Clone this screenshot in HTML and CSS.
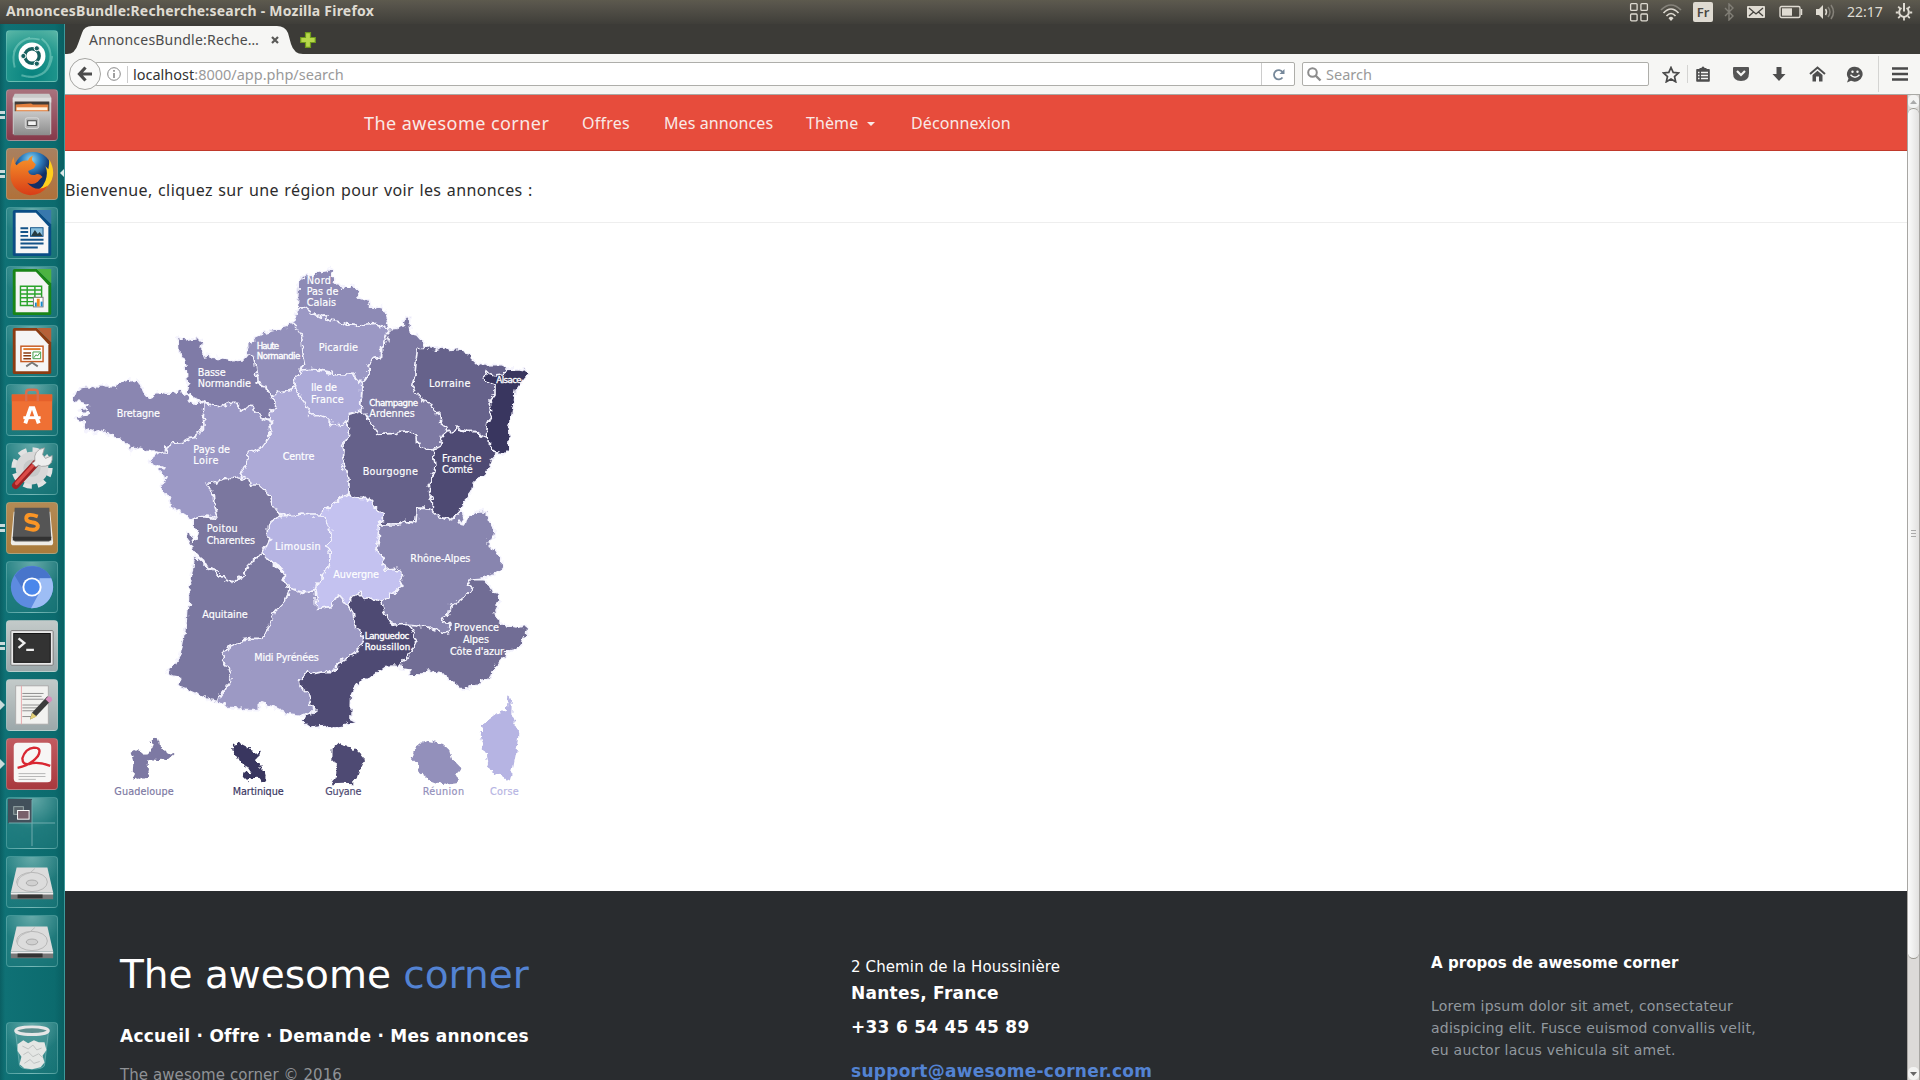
FILE: index.html
```html
<!DOCTYPE html>
<html lang="fr">
<head>
<meta charset="utf-8">
<title>AnnoncesBundle:Recherche:search</title>
<link rel="stylesheet" href="styles.css">
</head>
<body>
<header class="panel">
  <div class="panel-title">AnnoncesBundle:Recherche:search - Mozilla Firefox</div>
  <div class="indicators">
    <svg width="20" height="20" viewBox="0 0 20 20" fill="none" stroke="#dfdbd2" stroke-width="1.3"><rect x="1.6" y="1.6" width="6.5" height="6.8" rx="1"/><rect x="11.9" y="1.6" width="6.5" height="6.8" rx="1"/><rect x="1.6" y="12" width="6.5" height="6.8" rx="1"/><rect x="11.9" y="12" width="6.5" height="6.8" rx="1"/></svg>
    <svg width="22" height="20" viewBox="0 0 22 20" fill="none" stroke-width="1.7"><path d="M1 8Q11-2 21 8" stroke="#85827a"/><path d="M3.500 11Q11 3 18.500 11M6.500 14Q11 9 15.500 14" stroke="#dfdbd2"/><path d="M8.500 16.200Q11 13.500 13.500 16.200L11 19z" fill="#dfdbd2"/></svg>
    <span class="keyboard">Fr</span>
    <svg width="12" height="18" viewBox="0 0 12 18" fill="none" stroke="#827f77" stroke-width="1.4"><path d="M2 5l8 8-4 4V1l4 4-8 8"/></svg>
    <svg width="20" height="14" viewBox="0 0 20 14"><rect x="1" y="1" width="18" height="12" rx="1" fill="#dfdbd2"/><path d="M3 3l7 6 7-6M3 11l4.500-4M17 11l-4.500-4" fill="none" stroke="#45433e" stroke-width="1.300"/></svg>
    <svg width="24" height="14" viewBox="0 0 24 14"><rect x="1" y="1.500" width="20" height="11" rx="1.500" fill="none" stroke="#dfdbd2" stroke-width="1.400"/><rect x="3" y="3.300" width="10" height="7.400" fill="#dfdbd2"/><path d="M22.500 4v6" stroke="#dfdbd2" stroke-width="1.500"/></svg>
    <svg width="20" height="18" viewBox="0 0 20 18" fill="none" stroke-width="1.500"><path d="M1 6h3l4-4v14l-4-4H1z" fill="#dfdbd2"/><path d="M10.500 6q2 3 0 6" stroke="#dfdbd2"/><path d="M13 4q4 5 0 10M16 2q5 7 0 14" stroke="#85827a"/></svg>
    <span class="clock">22:17</span>
    <svg width="18" height="18" viewBox="0 0 18 18" fill="none" stroke="#dfdbd2" stroke-width="2"><path d="M6.500 5a4.800 4.800 0 1 0 5 0M9 0v8.500"/><path d="M3.200 3.700l2 2M14.800 3.700l-2 2M.8 9.500h2.700M14.500 9.500h2.700M3.200 15.200l2-2M14.800 15.200l-2-2M9 14v3.500" stroke-width="1.800"/></svg>
  </div>
</header>
<div class="desktop">
<nav class="launcher">
  <div class="tile t-dash"><svg viewBox="0 0 52 52"><g fill="none" stroke="#9fe0d2" stroke-opacity=".45" stroke-width="2"><path d="M8 38Q2 14 24 7M15 46Q40 53 45 30Q47 16 36 8M7 22Q14 4 34 9M22 48Q44 48 47 26"/></g><circle cx="26" cy="26" r="14" fill="#fff"/><circle cx="26" cy="26" r="7.500" fill="none" stroke="#17605f" stroke-width="3.500"/><g fill="#17605f" stroke="#fff"><circle cx="17" cy="26" r="2.700"/><circle cx="31" cy="18" r="2.700"/><circle cx="31" cy="34" r="2.700"/></g></svg></div>
  <div class="tile t-files"><i class="ticks"></i><svg viewBox="0 0 52 52"><path d="M8 4h36l2 4v38H6V8z" fill="#c9c9c9"/><path d="M6 8h40v5H6z" fill="#dedede"/><path d="M8 12h36v12H8z" fill="#403b38"/><path d="M9 15l16-1 2 1h16v10H9z" fill="#e2803f"/><path d="M10 18h32v3H10z" fill="#fff0dd"/><path d="M7 22h38v25H7z" fill="url(#metal)"/><rect x="19" y="29" width="14" height="11" rx="2" fill="#b4b4b4" stroke="#ddd"/><rect x="21.500" y="32" width="9" height="5" fill="#f4f4f4" stroke="#444"/></svg></div>
  <div class="tile t-firefox"><i class="ticks"></i><i class="focus"></i><svg viewBox="0 0 52 52"><circle cx="27" cy="23" r="20" fill="url(#globe)"/><path d="M44 11q9 16-2 28-8 9-20 8 14-3 18-14 3-8 0-15l3 3q1-5 1-10z" fill="#ffcf1d"/><path d="M7 8q0 6 3 9 5-6 12-5 1-4 5-5-2 4 0 6l3 3-2 4-6 3q1 5 7 4 4-3 8 2-3 2-5 5-5 4-11 1 9 11 22 3-7 10-19 10Q8 46 4 32 2 17 7 8z" fill="url(#fox)"/></svg></div>
  <div class="tile"><svg viewBox="0 0 52 52"><path d="M8 2h23l15 15v31q0 2-2 2H8q-2 0-2-2V4q0-2 2-2z" fill="#0a4d85"/><path d="M31 2h15v15z" fill="#3878ad"/><path d="M9 5h21l13 14v28H9z" fill="#f7f7f7"/><path d="M14 21h8M14 25h8M14 29h8M14 33h24M14 37h24M14 41h18" stroke="#145389" stroke-width="2"/><rect x="24.500" y="20.500" width="13" height="9" fill="#8bc1df" stroke="#145389"/><path d="M25 29l4-6 3 4 2-2 3 4z" fill="#263b42"/></svg></div>
  <div class="tile"><svg viewBox="0 0 52 52"><path d="M8 2h23l15 15v31q0 2-2 2H8q-2 0-2-2V4q0-2 2-2z" fill="#198517"/><path d="M31 2h15v15z" fill="#4db341"/><path d="M9 5h21l13 14v28H9z" fill="#f4f4f4"/><path d="M14 20h22v20H14zM14 24h22M14 28h22M14 32h22M14 36h22M21 20v20M29 20v20" fill="none" stroke="#2aa32b" stroke-width="1.500"/><rect x="27.500" y="31.500" width="10" height="10" fill="#fff" stroke="#777"/><path d="M29 41v-4h2v4z" fill="#168ccf"/><path d="M31 41v-8h3v8z" fill="#f28b20"/><path d="M35 41v-5h2v5z" fill="#168ccf"/></svg></div>
  <div class="tile"><svg viewBox="0 0 52 52"><path d="M8 2h23l15 15v31q0 2-2 2H8q-2 0-2-2V4q0-2 2-2z" fill="#8c3c12"/><path d="M31 2h15v15z" fill="#b76138"/><path d="M9 5h21l13 14v28H9z" fill="#f5f5f5"/><rect x="14.500" y="21" width="23" height="16" fill="#fff" stroke="#c55a21" stroke-width="1.500"/><path d="M17 24h18" stroke="#e07b2d" stroke-width="2"/><path d="M17 28h8M17 31h8M17 34h8" stroke="#8c3c12" stroke-width="1.500"/><path d="M27 34V27h8v7zM28 33l2-3 2 1 2-3" fill="none" stroke="#3d9a45"/><path d="M20 42l6-4 6 4" fill="none" stroke="#777" stroke-width="2"/></svg></div>
  <div class="tile"><svg viewBox="0 0 52 52"><path d="M5 10h42v37H5z" fill="#ef7034"/><path d="M5 10h42v7H5z" fill="#e5602b"/><path d="M20 17V8q0-3 3-3h6q3 0 3 3v9" fill="none" stroke="#d96e4e" stroke-width="2.500"/><path d="M19 40l5.500-16h3L33 40" fill="none" stroke="#fff" stroke-width="4"/><path d="M17 34h18" stroke="#fff" stroke-width="3"/></svg></div>
  <div class="tile"><svg viewBox="0 0 52 52"><circle cx="26" cy="25" r="18.500" fill="none" stroke="#e2e2e2" stroke-width="6" stroke-dasharray="8.500 6.030"/><circle cx="26" cy="25" r="12.500" fill="none" stroke="#d8d8d8" stroke-width="9"/><circle cx="26" cy="25" r="9" fill="#c6c9c9"/><path d="M9 43L30 20" stroke="#9e2224" stroke-width="7.500" stroke-linecap="round"/><path d="M10 41L30 19" stroke="#db4b48" stroke-width="3.500" stroke-linecap="round"/><path d="M29 18q-2-12 10-14l-2 7 3 4 7-3q1 10-7 11-5 1-7-1l-3 2-4-4z" fill="#eee" stroke="#999" stroke-width=".8"/></svg></div>
  <div class="tile t-sublime"><i class="ticks"></i><svg viewBox="0 0 52 52"><path d="M7 9h38l3 32q0 3-3 3H7q-3 0-3-3z" fill="#eeece7"/><path d="M8 5h36l2 31-2 4H8l-2-4z" fill="#555"/><path d="M6 35h40v4H6z" fill="#323232"/><path d="M32 14q-12-4-12 2 0 3 6 4 7 1 6 5-2 5-13 1" fill="none" stroke="#fb9525" stroke-width="4"/></svg></div>
  <div class="tile"><svg viewBox="0 0 52 52"><circle cx="26" cy="26" r="22" fill="#5d8be0"/><path d="M8 14A22 22 0 0 1 46 17H26L18 31z" fill="#4875cb"/><path d="M46 17A22 22 0 0 1 25 48l8-15 1-16z" fill="#9dbdf5"/><circle cx="26" cy="26" r="10" fill="#fff"/><circle cx="26" cy="26" r="8" fill="#4b87eb"/></svg></div>
  <div class="tile t-silver"><i class="ticks"></i><svg viewBox="0 0 52 52"><rect x="4" y="10" width="44" height="36" rx="1" fill="#e9e9e9" stroke="#777"/><rect x="7" y="13" width="38" height="30" fill="#333" stroke="#111"/><path d="M12 18l6 5-6 5M20 30h8" fill="none" stroke="#eee" stroke-width="2.500"/></svg></div>
  <div class="tile t-silver"><i class="arrow"></i><svg viewBox="0 0 52 52"><path d="M9 6h34v40H9z" fill="#f2f2f0" stroke="#aaa"/><path d="M15 6v40" stroke="#e6a9ad"/><path d="M16 14h22M16 17h20M16 20h22M16 26h18M16 29h16M16 32h13M16 38h10" stroke="#8d8d8d"/><path d="M24 41l2-7 16-17 4 4-16 17z" fill="#3c3c3c"/><path d="M24 41l2-7 5 4z" fill="#e2cf76"/><path d="M40 20l3-3q4 0 4 4l-3 3z" fill="#d88dbd"/></svg></div>
  <div class="tile t-pdf"><i class="arrow"></i><svg viewBox="0 0 52 52"><rect x="7" y="4" width="39" height="41" rx="4" fill="#f7f6f5"/><path d="M11 30q14-3 21-12 5-9-4-9-9 1-12 11 0 7 7 6 9-3 22 2" fill="none" stroke="#d92732" stroke-width="2.500"/><path d="M12 36h28M12 39h28M12 42h18" stroke="#b5b5b5"/></svg></div>
  <div class="tile"><svg viewBox="0 0 52 52"><path d="M1 1h25v25H1z" fill="#42505b"/><path d="M26 2v48M2 26h48" stroke="#74aeb0"/><rect x="7" y="9" width="10" height="8" fill="#59636a" stroke="#9aa"/><rect x="11" y="13" width="12" height="9" fill="#79606b" stroke="#fff"/></svg></div>
  <div class="tile"><svg viewBox="0 0 52 52"><use href="#disk"/></svg></div>
  <div class="tile"><svg viewBox="0 0 52 52"><use href="#disk"/></svg></div>
  <div class="tile t-trash"><svg viewBox="0 0 52 52"><path d="M9 10h34l-4 34q-1 4-13 4t-13-4z" fill="#4f9a9a" fill-opacity=".6" stroke="#9cc" stroke-width=".5"/><path d="M11 22l6-4 5 3 6-3 5 2 6 0 2 8-4 6 2 7-4 5-9 2-8-1-5-4 2-8-4-6z" fill="#e4e6e4"/><path d="M16 24l6 3 5-4 4 5 5-2M17 33l5-3 5 5 6-3 4 4M18 42l6-4 4 4 6-2" fill="none" stroke="#bcc1bf"/><ellipse cx="26" cy="8" rx="17" ry="4" fill="#5c8e8e" stroke="#e6e6e6" stroke-width="3"/></svg></div>
</nav>
<main class="browser">
  <div class="tabs">
    <div class="tab"><svg class="tab-shape" width="236" height="28" viewBox="0 0 236 28"><path d="M0 28Q8 28 11 18L15 7Q17 0 25 0H210Q218 0 221 7L224 18Q227 28 236 28z" fill="#f6f6f4"/></svg><span class="tab-label">AnnoncesBundle:Reche…</span><svg class="tab-close" width="8" height="8" viewBox="0 0 8 8"><path d="M1 1l6 6M7 1L1 7" stroke="#5a5a58" stroke-width="2.200"/></svg></div>
    <svg class="new-tab" width="16" height="16" viewBox="0 0 16 16"><path d="M5.500.7h5v4.800h4.800v5h-4.800v4.800h-5v-4.800H.7v-5h4.800z" fill="#b7d84a" stroke="#6f9a1c" stroke-width="1.200"/></svg>
  </div>
  <div class="toolbar">
    <div class="back"><svg width="16" height="16" viewBox="0 0 16 16"><path d="M8.500 1.500L2.500 8l6 6.500M3 8h12" fill="none" stroke="#4c4c4c" stroke-width="3.200"/></svg></div>
    <div class="urlbar">
      <svg width="14" height="14" viewBox="0 0 14 14"><circle cx="7" cy="7" r="6.300" fill="none" stroke="#888"/><path d="M7 6v5M7 3v1.700" stroke="#888" stroke-width="1.600"/></svg>
      <span class="url"><b>localhost</b>:8000/app.php/search</span>
      <span class="reload"><svg width="13" height="13" viewBox="0 0 13 13"><path d="M10.500 9.500a4.700 4.700 0 1 1 0-5.500" fill="none" stroke="#76889a" stroke-width="1.800"/><path d="M12.500 1v5h-5z" fill="#76889a"/></svg></span>
    </div>
    <div class="searchbar"><svg width="15" height="15" viewBox="0 0 15 15"><circle cx="5.500" cy="5.500" r="4.300" fill="none" stroke="#8c8c8c" stroke-width="2"/><path d="M8.500 8.500l5 5" stroke="#8c8c8c" stroke-width="2.400"/></svg><span>Search</span></div>
    <div class="tools">
      <svg width="18" height="17" viewBox="0 0 18 17"><path d="M9 1.500l2.200 4.900 5.300.6-4 3.500 1.200 5.300L9 13l-4.700 2.800 1.200-5.300-4-3.500 5.300-.6z" fill="none" stroke="#4a4a4a" stroke-width="1.700"/></svg>
      <span class="split list"><svg width="14" height="16" viewBox="0 0 14 16"><path d="M3.500 3V2h2q0-1.500 1.500-1.500T8.500 2h2v1H13q.8 0 .8.800V15q0 .8-.8.800H1q-.8 0-.8-.8V3.800Q.2 3 1 3z" fill="#4e4e4e"/><path d="M2 6.500h1.500M2 9.500h1.500M2 12.500h1.500M5 6.500h7M5 9.500h7M5 12.500h7" stroke="#f6f6f4" stroke-width="1.600"/></svg></span>
      <svg width="18" height="16" viewBox="0 0 18 16"><path d="M2 1h14q1 0 1 1v5q0 8-8 8T1 7V2q0-1 1-1z" fill="#555"/><path d="M5 5l4 4 4-4" fill="none" stroke="#f6f6f4" stroke-width="2.200"/></svg>
      <svg width="16" height="16" viewBox="0 0 16 16"><path d="M5.500 1h5v7h4L8 15 1.500 8h4z" fill="#4e4e4e"/></svg>
      <svg width="17" height="16" viewBox="0 0 17 16"><path d="M1 8l7.500-6.500L16 8" fill="none" stroke="#4e4e4e" stroke-width="2"/><path d="M3.500 9l5-4.300 5 4.300v6.500h-3.500v-5h-3v5H3.500z" fill="#4e4e4e"/></svg>
      <svg width="18" height="17" viewBox="0 0 18 17"><path d="M9 .8a8 7.400 0 1 1-4 14L1 16.500l1.500-4A7.300 7.300 0 0 1 9 .8z" fill="#505050"/><path d="M4.500 8.800q4.500 5 9 0" fill="none" stroke="#f6f6f4" stroke-width="1.400"/><circle cx="6.500" cy="5.700" r="1.200" fill="#f6f6f4"/><circle cx="11.500" cy="5.700" r="1.200" fill="#f6f6f4"/></svg>
      <span class="split menu"><svg width="16" height="14" viewBox="0 0 16 14"><path d="M0 1.500h16M0 7h16M0 12.500h16" stroke="#4a4a4a" stroke-width="2.700"/></svg></span>
    </div>
  </div>
  <div class="viewport">
    <div class="page">
      <div class="navbar"><span class="brand">The awesome corner</span><span class="n1">Offres</span><span class="n2">Mes annonces</span><span class="n3">Thème<i class="caret"></i></span><span class="n4">Déconnexion</span></div>
      <p class="welcome"><span>Bienvenue, cliquez sur une région pour voir les annonces :</span></p>
      <div class="map-area">
      <svg class="map" width="480" height="560" viewBox="15 0 1440 1680">
        <defs>
          <linearGradient id="metal" x2="0" y2="1"><stop stop-color="#c8c8c8"/><stop offset="1" stop-color="#8c8c8c"/></linearGradient>
          <radialGradient id="globe" cx=".45" cy=".2"><stop stop-color="#8fd8f4"/><stop offset=".5" stop-color="#2d7fc0"/><stop offset="1" stop-color="#122f66"/></radialGradient>
          <linearGradient id="fox" x2="0" y2="1"><stop stop-color="#f7942a"/><stop offset="1" stop-color="#d83d17"/></linearGradient>
          <g id="disk"><path d="M10 11h32l6 26H4z" fill="#dcdcdc"/><path d="M4 37h44v7H4z" fill="#777"/><path d="M4 37h44v2H4z" fill="#eee"/><path d="M11 39h26v4H11z" fill="#333"/><ellipse cx="26" cy="26" rx="16" ry="10" fill="none" stroke="#b5b5b5"/><ellipse cx="26" cy="27" rx="6" ry="3" fill="#d0d0d0" stroke="#aaa"/><path d="M11 28q0-7 8-10 6-1 10-6" fill="none" stroke="#bbb"/></g>
          <filter id="coast" filterUnits="userSpaceOnUse" x="15" y="0" width="1440" height="1680" color-interpolation-filters="sRGB"><feTurbulence type="fractalNoise" baseFrequency=".06" numOctaves="2" seed="4" result="n"/><feDisplacementMap in="SourceGraphic" in2="n" scale="22" xChannelSelector="R" yChannelSelector="G"/></filter>
        </defs>
        <g class="regions" filter="url(#coast)">
          <path fill="#8d8ab5" d="M715 92L728 84 740 75 762 72 780 65 800 62 812 56 820 70 822 95 835 105 842 104 850 115 865 110 875 103 888 110 892 125 895 143 912 148 928 150 932 170 950 172 965 168 972 182 983 188 978 200 983 210 980 222 985 236 700 215 712 175z"/>
          <path fill="#9b98c4" d="M712 175L735 173 758 190 772 198 790 202 802 195 800 207 830 213 860 224 890 226 920 222 950 220 965 228 983 237 983 260 975 285 965 290 965 322 940 326 925 345 928 360 922 375 915 390 905 402 885 382 724 360 690 220 700 215 708 195z"/>
          <path fill="#9390bb" d="M560 310L558 295 565 278 576 272 585 262 610 250 630 244 650 240 675 232 692 218 712 235 728 258 724 280 726 310 733 340 724 360 720 375 705 380 702 405 690 422 640 440 580 380z"/>
          <path fill="#7d79a3" d="M983 237L1010 235 1030 228 1030 215 1035 208 1045 198 1050 205 1048 225 1052 250 1070 255 1082 268 1095 275 1095 290 1180 545 1145 560 1142 588 1120 602 1080 620 960 580 905 483 902 460 905 430 905 402 915 390 922 375 928 360 925 345 940 326 965 322 965 290 975 285 983 260z"/>
          <path fill="#adaad7" d="M632 438L665 424 690 422 702 405 900 483 866 492 862 520 868 540 862 565 848 585 852 600 850 640 862 675 867 690 867 732 783 797 665 797 540 680 545 665 558 640 562 608 575 605 605 592 625 565 632 545 630 520 635 515 620 500z"/>
          <path fill="#acaad8" d="M724 360L750 358 790 362 818 368 825 374 868 375 880 372 885 382 905 402 905 430 902 460 905 483 885 488 865 490 870 505 862 518 840 523 808 525 812 515 800 503 780 496 755 498 735 460 712 430 702 405 705 380 720 375z"/>
          <path fill="#7f7ba7" d="M350 260L370 268 380 272 395 268 415 265 428 275 423 300 430 318 445 315 455 322 475 322 500 325 520 332 550 330 565 312 580 320 585 340 588 360 592 400 612 405 625 425 632 438 645 458 643 475 628 490 627 512 612 505 500 490 380 432 385 410 380 385 378 345 370 325 360 312 358 285z"/>
          <path fill="#8a86b1" d="M380 432L360 422 345 428 325 430 305 422 295 430 285 432 265 442 255 430 248 415 240 408 235 395 228 386 215 392 205 390 190 395 178 393 170 410 150 410 140 402 130 408 115 408 105 404 90 410 65 412 48 425 42 440 42 457 62 457 82 462 82 475 58 478 65 487 85 487 88 494 62 497 42 503 68 515 80 545 100 548 120 542 140 550 165 560 195 575 208 590 210 608 222 592 245 598 270 606 295 606 315 612 360 600 440 540 440 460 432 458 415 452 400 462 390 455z"/>
          <path fill="#9b98c5" d="M315 605L318 590 335 580 365 578 385 566 408 562 415 545 432 530 430 500 432 460 455 464 490 468 510 460 528 460 547 480 562 468 580 470 585 488 612 505 635 515 630 520 632 545 625 565 605 592 575 605 562 608 558 640 545 665 540 680 480 810 405 808 395 808 375 795 350 780 335 770 325 745 310 725 302 706 315 695 318 682 302 672 298 658 312 650 300 645 275 645 265 632 285 615z"/>
          <path fill="#7b779f" d="M400 812L410 802 430 800 465 805 472 795 462 760 460 735 440 700 465 698 480 690 500 685 525 685 540 680 572 695 575 708 600 708 615 720 632 740 640 765 650 780 665 797 640 810 650 880 605 908 585 930 565 945 550 980 530 985 515 997 490 985 470 965 445 955 430 930 410 912 392 900 392 880 380 865 380 842 392 848 402 875 410 865 415 845 400 830z"/>
          <path fill="#66628b" d="M1090 295L1110 292 1130 298 1150 290 1170 298 1195 295 1210 305 1232 310 1235 325 1255 345 1265 336 1280 345 1310 343 1325 345 1335 350 1345 360 1310 400 1300 520 1275 560 1262 555 1250 545 1225 545 1215 542 1190 535 1175 545 1162 545 1155 530 1142 520 1140 495 1122 480 1110 460 1080 445 1070 430 1058 410 1065 370 1068 340 1072 295z"/>
          <path fill="#39365f" d="M1342 358L1375 356 1395 360 1407 370 1390 390 1380 405 1370 420 1365 440 1362 460 1358 480 1355 500 1350 515 1345 530 1348 565 1345 600 1330 614 1310 612 1298 600 1285 585 1285 570 1275 560 1280 520 1295 490 1290 450 1305 430 1305 405 1290 400 1280 392 1270 385 1280 365 1285 370 1305 375 1330 372z"/>
          <path fill="#65618a" d="M905 483L918 495 928 515 945 535 955 553 1010 550 1015 545 1050 542 1068 560 1070 580 1085 590 1100 598 1120 600 1140 790 1095 775 1072 775 1068 815 1055 818 1035 812 1010 825 965 825 940 790 867 732 867 690 862 675 850 640 852 600 848 585 862 565 868 540 862 520 866 492 885 488z"/>
          <path fill="#4e4a73" d="M1162 545L1175 545 1190 535 1215 542 1225 545 1250 545 1262 555 1275 560 1290 570 1293 595 1298 605 1315 610 1295 630 1290 650 1265 680 1240 700 1235 725 1220 745 1205 765 1200 785 1185 800 1165 808 1140 802 1120 785 1120 760 1110 740 1108 705 1115 685 1125 650 1122 620 1120 600 1142 588 1145 560z"/>
          <path fill="#8885af" d="M955 825L1010 825 1035 812 1055 818 1068 815 1072 775 1095 775 1115 780 1140 802 1165 808 1185 800 1205 785 1212 798 1198 818 1215 822 1222 798 1245 785 1262 782 1285 785 1285 810 1305 845 1300 865 1288 870 1288 890 1312 905 1315 915 1328 930 1328 955 1300 975 1265 985 1200 1160 1045 1123 1005 1145 950 1110 940 920z"/>
          <path fill="#716d95" d="M1262 988L1275 990 1290 1010 1300 1025 1318 1030 1320 1050 1305 1080 1310 1105 1330 1122 1375 1132 1403 1125 1402 1145 1390 1165 1385 1185 1370 1198 1340 1205 1340 1220 1325 1230 1300 1260 1290 1290 1260 1295 1255 1306 1230 1308 1230 1318 1200 1315 1185 1300 1165 1290 1160 1275 1110 1265 1100 1260 1090 1275 1050 1274 1048 1260 1018 1255 1045 1123 1070 1125 1080 1130 1100 1128 1130 1140 1150 1150 1168 1147 1170 1120 1150 1118 1145 1105 1165 1095 1170 1070 1205 1045 1225 1030 1238 1015 1222 1005 1230 990z"/>
          <path fill="#7a77a0" d="M405 918L430 940 445 955 470 965 490 985 515 997 530 985 550 980 565 945 585 930 605 908 700 1000 600 1300 475 1355 450 1350 420 1335 385 1320 355 1312 362 1290 360 1278 340 1275 318 1263 345 1245 358 1220 365 1180 378 1120 380 1080 384 1070 395 1058 388 1050 390 1010 395 970 400 940z"/>
          <path fill="#9c99c4" d="M685 1010L765 1015 840 1010 875 1020 890 1080 930 1160 900 1240 755 1390 730 1397 685 1392 650 1375 598 1357 598 1382 550 1382 540 1375 500 1372 475 1355 480 1340 495 1320 513 1285 505 1255 488 1230 495 1205 510 1188 525 1185 540 1170 580 1165 600 1165 620 1145 635 1110 645 1085 670 1060 688 1020z"/>
          <path fill="#b6b4e3" d="M605 908L620 890 632 865 622 860 622 825 640 810 665 797 700 797 725 792 750 795 783 795 835 830 835 930 790 1040 765 1022 735 1028 710 1022 685 1012 670 990 670 960 645 940 620 925z"/>
          <path fill="#c4c2f0" d="M783 794L795 780 815 765 838 745 862 735 867 730 880 742 900 745 930 745 940 765 955 785 970 795 970 812 955 825 955 865 948 895 970 925 975 958 1005 955 1022 965 1028 990 1015 1020 985 1040 965 1057 865 1070 835 1035 820 1055 815 1070 770 1075 768 1040 765 1022 770 1000 785 985 805 950 808 905 800 890 813 865 812 840 798 815z"/>
          <path fill="#4e4a73" d="M965 1055L975 1085 990 1115 1005 1125 1045 1123 1055 1135 1068 1175 1050 1210 1018 1250 1000 1248 975 1250 935 1280 900 1295 880 1320 875 1330 873 1405 888 1412 885 1420 860 1422 845 1430 830 1432 812 1436 790 1427 765 1430 750 1432 735 1420 722 1412 735 1400 755 1390 768 1380 745 1362 752 1350 750 1335 720 1310 718 1290 740 1268 765 1270 790 1265 828 1265 830 1245 860 1225 890 1205 908 1175 905 1145 885 1130 880 1090 865 1065 872 1045 885 1038 900 1030 910 1045 935 1042 950 1050z"/>
        </g>
        <g class="islands" filter="url(#coast)">
          <path fill="#7d79a3" d="M212 1505L225 1497 245 1505 255 1515 272 1508 278 1485 275 1470 283 1460 298 1470 300 1492 315 1503 338 1515 330 1522 300 1530 262 1528 260 1545 267 1560 263 1580 240 1590 225 1585 218 1570 220 1535z"/>
          <path fill="#39365f" d="M517 1485L540 1480 560 1490 585 1508 603 1505 595 1520 588 1527 597 1545 612 1560 617 1580 610 1602 600 1590 595 1583 570 1585 565 1597 548 1580 550 1567 575 1570 562 1550 540 1540 530 1520 517 1500z"/>
          <path fill="#4e4a73" d="M835 1480L845 1485 870 1492 895 1505 905 1518 915 1530 905 1550 895 1570 890 1585 878 1600 850 1598 815 1600 828 1580 830 1555 817 1535 818 1495z"/>
          <path fill="#9390bb" d="M1070 1490L1085 1478 1105 1473 1150 1483 1168 1500 1175 1525 1200 1550 1190 1585 1190 1600 1150 1605 1110 1590 1075 1565 1070 1540 1052 1520z"/>
          <path fill="#b6b4e3" d="M1345 1338L1355 1360 1354 1390 1360 1410 1370 1425 1375 1455 1370 1500 1360 1550 1350 1590 1340 1595 1325 1572 1300 1570 1295 1560 1280 1555 1285 1535 1280 1510 1265 1500 1272 1485 1265 1470 1258 1440 1270 1440 1265 1425 1275 1415 1310 1390 1340 1382z"/>
        </g>
        <g class="labels">
          <text x="740" y="103" textLength="73">Nord</text><text x="740" y="135" textLength="95">Pas de</text><text x="740" y="168" textLength="88">Calais</text>
          <text x="776" y="302" textLength="118">Picardie</text>
          <text class="narrow" x="590" y="296" textLength="67">Haute</text><text class="narrow" x="590" y="328" textLength="131">Normandie</text>
          <text x="413" y="377" textLength="84">Basse</text><text x="413" y="412" textLength="160">Normandie</text>
          <text x="753" y="423" textLength="78">Ile de</text><text x="753" y="459" textLength="98">France</text>
          <text class="narrow" x="928" y="467" textLength="146">Champagne</text><text x="928" y="501" textLength="136">Ardennes</text>
          <text x="1107" y="410" textLength="124">Lorraine</text><text class="narrow" x="1309" y="399" textLength="76">Alsace</text>
          <text x="170" y="501" textLength="130">Bretagne</text>
          <text x="400" y="610" textLength="110">Pays de</text><text x="400" y="642" textLength="75">Loire</text>
          <text x="668" y="629" textLength="95">Centre</text><text x="908" y="674" textLength="166">Bourgogne</text>
          <text x="1146" y="636" textLength="118">Franche</text><text x="1146" y="670" textLength="92">Comté</text>
          <text x="440" y="845" textLength="93">Poitou</text><text x="440" y="881" textLength="145">Charentes</text>
          <text x="645" y="901" textLength="137">Limousin</text><text x="820" y="985" textLength="137">Auvergne</text>
          <text x="1051" y="937" textLength="180">Rhône-Alpes</text><text x="427" y="1103" textLength="136">Aquitaine</text>
          <text x="583" y="1232" textLength="193">Midi Pyrénées</text>
          <text class="narrow" x="914" y="1168" textLength="134">Languedoc</text><text class="narrow" x="914" y="1200" textLength="137">Roussillon</text>
          <text x="1182" y="1142" textLength="135">Provence</text><text x="1209" y="1178" textLength="78">Alpes</text><text x="1170" y="1214" textLength="162">Côte d'azur</text>
          <text class="c1" x="163" y="1636" textLength="178">Guadeloupe</text><text class="c2" x="518" y="1636" textLength="153">Martinique</text><text class="c3" x="796" y="1636" textLength="108">Guyane</text><text class="c4" x="1088" y="1636" textLength="124">Réunion</text><text class="c5" x="1290" y="1636" textLength="86">Corse</text>
        </g>
      </svg>
      </div>
      <footer class="footer">
        <div class="f-left"><h3>The awesome <span>corner</span></h3><p class="links">Accueil · Offre · Demande · Mes annonces</p><p class="copy">The awesome corner © 2016</p></div>
        <div class="f-center"><p class="street">2 Chemin de la Houssinière</p><p class="city">Nantes, France</p><p class="phone">+33 6 54 45 45 89</p><p class="mail">support@awesome-corner.com</p></div>
        <div class="f-right"><h4>A propos de awesome corner</h4><p>Lorem ipsum dolor sit amet, consectateur<br>adispicing elit. Fusce euismod convallis velit,<br>eu auctor lacus vehicula sit amet.</p></div>
      </footer>
    </div>
    <div class="scrollbar"><span class="step"><svg width="7" height="4" viewBox="0 0 7 4"><path d="M0 4L3.500 0 7 4z" fill="#aaa"/></svg></span><div class="thumb"><i></i><i></i><i></i></div><div class="trough"></div><span class="step"><svg width="7" height="4" viewBox="0 0 7 4"><path d="M0 0h7L3.500 4z" fill="#666"/></svg></span></div>
  </div>
</main>
</div>
</body>
</html>
```
FILE: styles.css
```css
* { box-sizing: border-box; }
body { margin: 0; width: 1920px; height: 1080px; overflow: hidden; display: flex; flex-direction: column; font-family: "Noto Sans", "Open Sans", sans-serif; }
p, h3, h4 { margin: 0; }
svg { display: block; flex: none; }

.panel { height: 24px; flex: none; display: flex; justify-content: space-between; align-items: center; background: linear-gradient(#5d5a4e, #57544b 20%, #3f3e39); color: #dfdbd2; }
.panel-title { padding-left: 6px; font-size: 14px; font-weight: 700; letter-spacing: .22px; line-height: 22px; height: 24px; white-space: nowrap; }
.indicators { display: grid; grid-template-columns: 32px 32px 32px 20px 34px 36px 32px 48px 30px; justify-items: center; align-items: center; height: 24px; padding-right: 1px; }
.keyboard { width: 20px; height: 20px; border-radius: 2px; background: #dfdbd2; color: #4a4843; font-size: 13px; font-weight: 600; line-height: 20px; text-align: center; }
.clock { font-size: 14px; line-height: 24px; }

.desktop { flex: 1; min-height: 0; display: flex; }
.launcher { width: 65px; flex: none; display: flex; flex-direction: column; gap: 7px; padding: 6px 0 6px 6px; background: linear-gradient(90deg, #0a5f63, #0f7175 8%, #0c6b6e 85%, #095f62); border-right: 1px solid #3d999b; }
.tile { position: relative; width: 52px; height: 52px; flex: none; border-radius: 4px; border: 1px solid rgba(160, 220, 215, .3); background: radial-gradient(circle at 50% 0, rgba(190, 230, 225, .5), rgba(120, 190, 185, .18) 55%, rgba(120, 190, 185, .1)); }
.tile svg { width: 50px; height: 50px; }
.t-dash { background: radial-gradient(circle at 50% 90%, #07827e, #22988e 60%, #5bb7a7); }
.t-files { background: linear-gradient(#a9727d, #86394a); }
.t-firefox { background: linear-gradient(#a9805f, #b0713a); }
.t-sublime { background: linear-gradient(#b38a55, #a97b3c); }
.t-silver { background: linear-gradient(#c3cac9, #9ca8aa); }
.t-pdf { background: linear-gradient(#c25b60, #a8393e); }
.t-trash { margin-top: auto; }
.ticks { position: absolute; left: -7px; top: 21px; width: 5px; height: 8px; border: solid #c9dcdc; border-width: 3px 0; }
.arrow { position: absolute; left: -7px; top: 20px; border: 5px solid transparent; border-left-color: #c9dcdc; border-right: 0; }
.focus { position: absolute; right: -7px; top: 20px; border: 4px solid transparent; border-right-color: #dce9e8; border-left: 0; }

.browser { flex: 1; min-width: 0; display: flex; flex-direction: column; background: #fff; }
.tabs { height: 30px; flex: none; display: flex; align-items: flex-end; padding-left: 2px; background: #3c3b37; }
.tab { position: relative; width: 234px; height: 28px; }
.tab-shape { position: absolute; left: 0; top: 0; }
.tab-label { position: absolute; left: 22px; top: 0; font-size: 14px; line-height: 28px; letter-spacing: .2px; color: #4c4c4c; white-space: nowrap; }
.tab-close { position: absolute; left: 204px; top: 10px; }
.new-tab { margin: 0 0 6px -1px; }
.toolbar { height: 41px; flex: none; display: flex; align-items: center; padding-left: 4px; background: #f6f6f4; border-bottom: 1px solid #a9a9a5; font-size: 14.500px; color: #9a9a9a; }
.back { z-index: 1; width: 32px; height: 32px; flex: none; display: grid; place-items: center; border: 1px solid #a5a5a2; border-radius: 50%; background: #f9f9f8; }
.urlbar { width: 1200px; height: 24px; margin-left: -6px; padding-left: 11px; display: flex; align-items: center; border: 1px solid #aeaeaa; border-radius: 2px; background: #fff; }
.url { margin-left: 6px; padding-left: 5px; border-left: 1px solid #ccc; line-height: 17px; white-space: nowrap; }
.url b { font-weight: 400; color: #333; }
.reload { margin-left: auto; width: 33px; height: 22px; display: grid; place-items: center; border-left: 1px solid #ccc; }
.searchbar { width: 347px; height: 24px; margin-left: 7px; padding-left: 4px; display: flex; align-items: center; gap: 4px; border: 1px solid #aeaeaa; border-radius: 2px; background: #fff; }
.tools { flex: 1; display: grid; grid-template-columns: 33px 34px 39px 38px 38px 38px 1fr; justify-items: center; align-items: center; padding-left: 5px; }
.split { width: 100%; height: 18px; display: grid; place-items: center; border-left: 1px solid #d4d4d2; }
.split.list { padding-right: 4px; }
.split.menu { height: 36px; width: calc(100% - 4px); justify-self: end; }

.viewport { flex: 1; min-height: 0; display: flex; }
.page { width: 1842px; overflow: hidden; display: flex; flex-direction: column; }
.navbar { height: 56px; flex: none; display: flex; align-items: center; padding: 0 0 0 299px; background: #e74c3c; border-bottom: 1px solid #c0392b; color: #f9e9e7; font-family: "Noto Sans", sans-serif; font-weight: 400; font-size: 16px; white-space: nowrap; }
.navbar span { flex: none; }
.brand { width: 218px; font-size: 18px; letter-spacing: .45px; }
.n1 { width: 82px; letter-spacing: .25px; }
.n2 { width: 142px; letter-spacing: .1px; }
.n3 { width: 105px; letter-spacing: .1px; }
.caret { display: inline-block; margin-left: 9px; vertical-align: 3px; border: 4px solid transparent; border-top-color: #f9e9e7; border-bottom: 0; }
.n4 { letter-spacing: .1px; }
.welcome { height: 72px; flex: none; padding-top: 26px; line-height: 26px; font-size: 16px; letter-spacing: .4px; word-spacing: .8px; color: #2c2c2c; border-bottom: 1px solid #eee; white-space: nowrap; }
.map-area { height: 668px; flex: none; padding-top: 27px; }
.map text { font-family: "DejaVu Sans", sans-serif; font-size: 29px; fill: #fff; stroke: #fff; stroke-width: .5; }
.map .narrow { font-size: 26px; stroke-width: 1; }
.regions path { stroke: #f4f3fd; stroke-width: 5; stroke-linejoin: round; }
.labels .c1 { fill: #7d79a3; stroke: #7d79a3; }
.labels .c2 { fill: #39365f; stroke: #39365f; }
.labels .c3 { fill: #4e4a73; stroke: #4e4a73; }
.labels .c4 { fill: #9390bb; stroke: #9390bb; }
.labels .c5 { fill: #b6b4e3; stroke: #b6b4e3; }

.footer { flex: 1; min-height: 0; display: flex; background: #292c2f; color: #fff; font-family: "DejaVu Sans", sans-serif; padding: 55px 0 0 55px; white-space: nowrap; }
.f-left { width: 731px; flex: none; }
.f-left h3 { font-size: 39px; font-weight: 400; line-height: 57px; }
.f-left h3 span, .mail { color: #5383d3; }
.links { margin-top: 20px; font-size: 17px; font-weight: 700; line-height: 26px; letter-spacing: .25px; }
.copy { margin-top: 13px; font-size: 15px; letter-spacing: .08px; line-height: 26px; color: #8f9296; }
.f-center { width: 580px; flex: none; padding-top: 8px; }
.street { font-size: 15px; letter-spacing: .12px; line-height: 26px; }
.city, .phone, .mail { font-size: 17px; font-weight: 700; line-height: 26px; letter-spacing: .27px; }
.phone { margin-top: 8px; }
.mail { margin-top: 18px; }
.f-right h4 { margin-top: 4px; font-size: 15px; letter-spacing: .06px; line-height: 26px; }
.f-right p { margin-top: 19px; font-size: 14px; letter-spacing: .22px; line-height: 22px; color: #92999f; }

.scrollbar { width: 13px; flex: none; display: flex; flex-direction: column; background: #dcdad8; border: solid #a8a6a3; border-width: 0 1px; }
.step { height: 13px; flex: none; display: grid; place-items: center; background: #f3f3f2; border-radius: 5px; }
.thumb { height: 851px; flex: none; display: flex; flex-direction: column; justify-content: center; align-items: center; gap: 2px; background: linear-gradient(90deg, #fbfbfb, #e2e1e0); border: 1px solid #99968f; border-width: 1px 0; border-radius: 6px; }
.thumb i { width: 5px; height: 1px; background: #aaa; }
.trough { flex: 1; }
```
